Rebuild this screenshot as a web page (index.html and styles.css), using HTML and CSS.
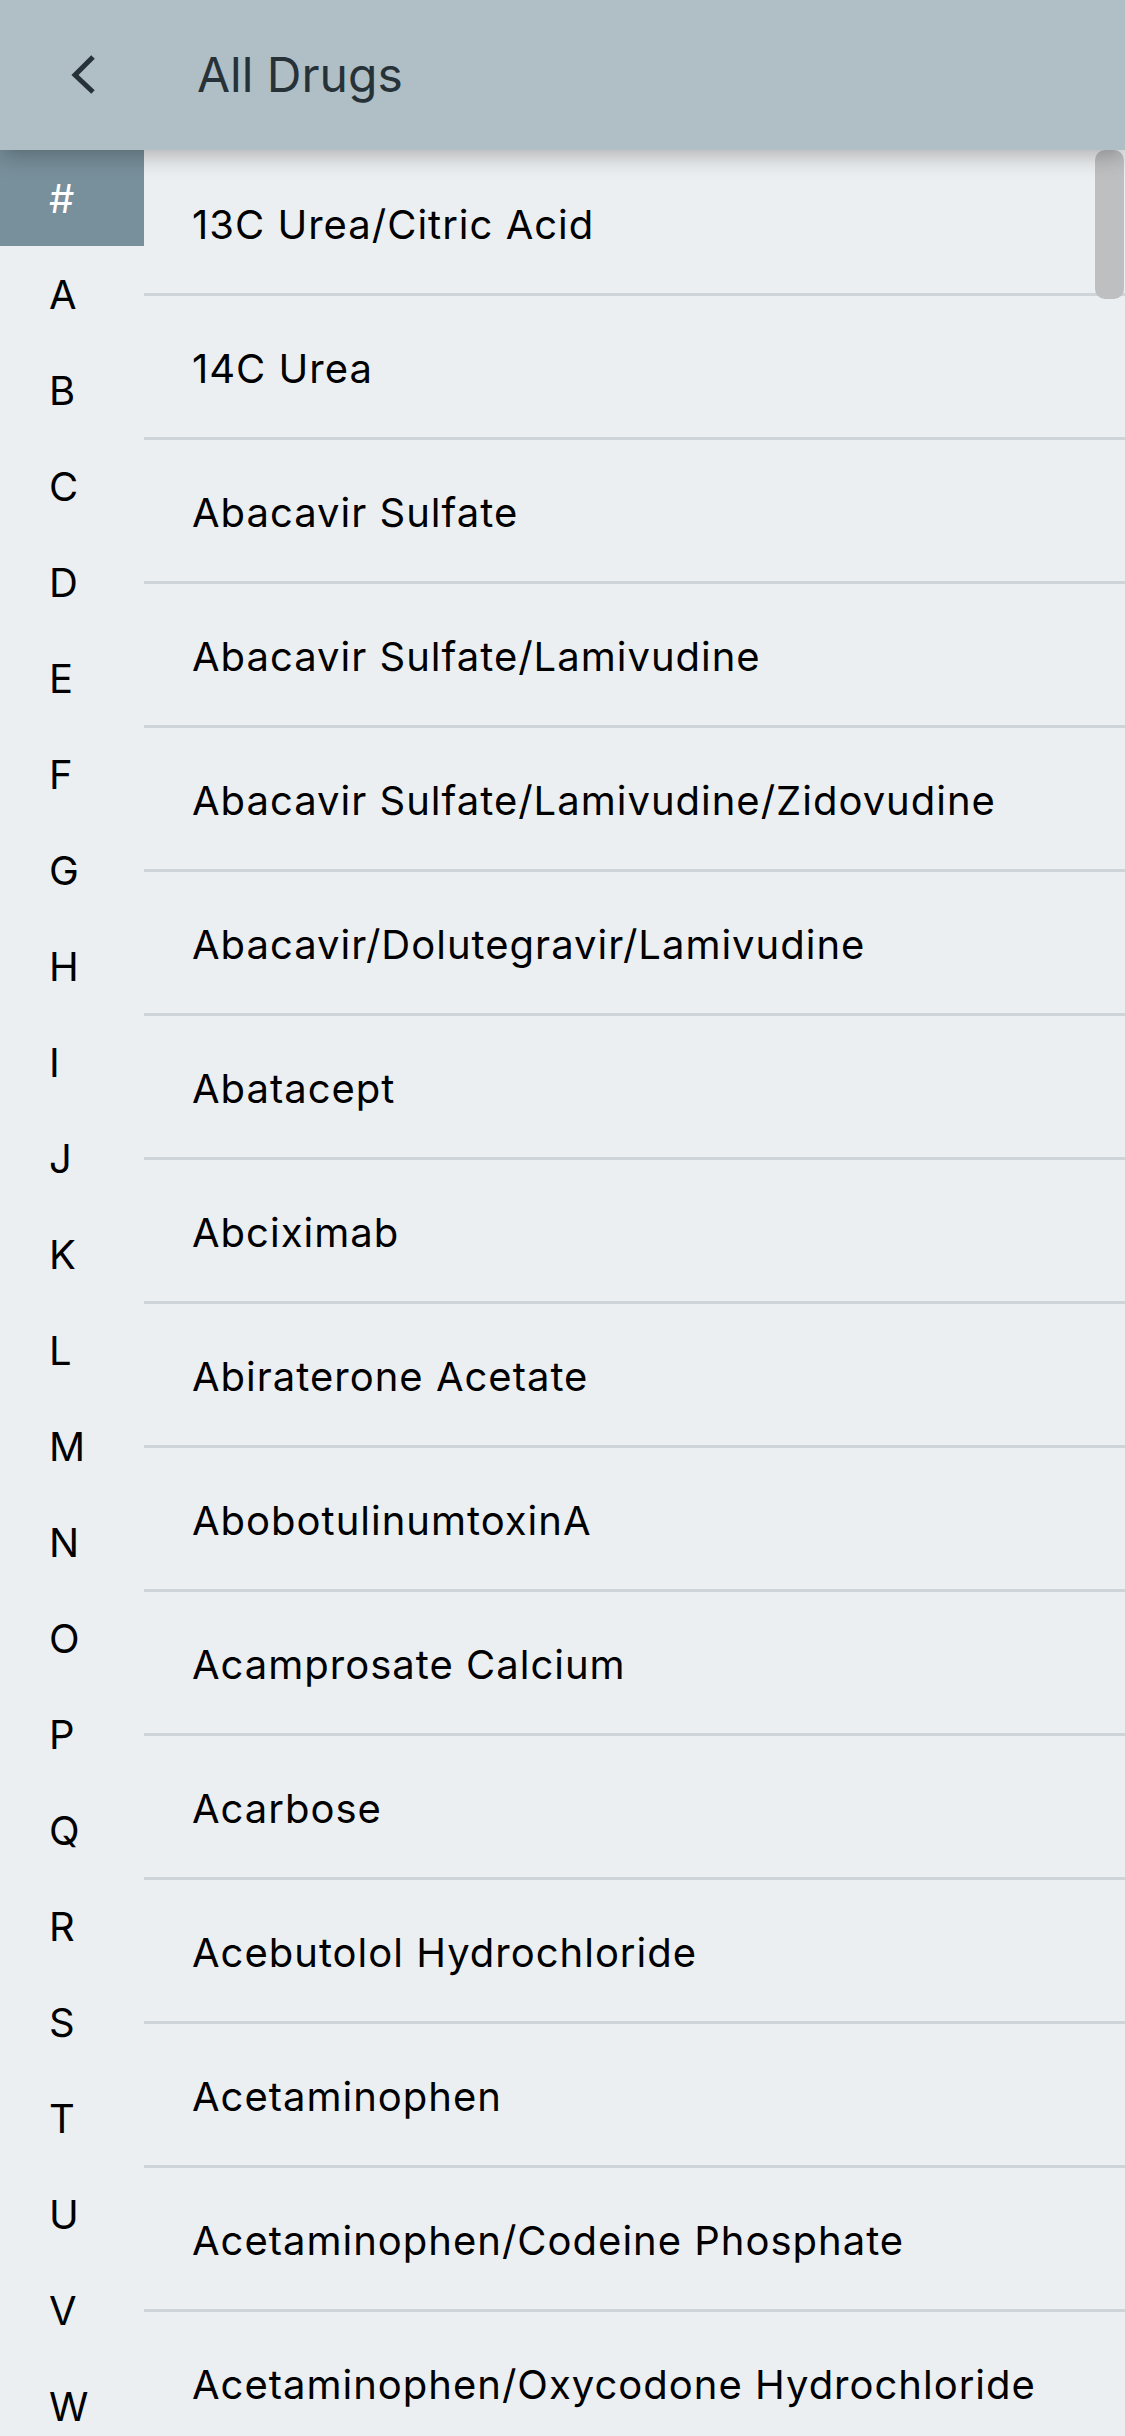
FILE: index.html
```html
<!DOCTYPE html>
<html>
<head>
<meta charset="utf-8">
<link rel="stylesheet" href="styles.css">
</head>
<body>
<div class="app">
  <header class="topbar">
    <div class="back">
      <svg width="40" height="48" viewBox="0 0 40 48"><polyline points="29,7 11,25 29,42" fill="none" stroke="#263238" stroke-width="5" stroke-linecap="butt" stroke-linejoin="miter"/></svg>
    </div>
    <div class="title">All Drugs</div>
  </header>
  <div class="content">
    <nav class="index">
      <div class="letter active">#</div>
      <div class="letter">A</div>
      <div class="letter">B</div>
      <div class="letter">C</div>
      <div class="letter">D</div>
      <div class="letter">E</div>
      <div class="letter">F</div>
      <div class="letter">G</div>
      <div class="letter">H</div>
      <div class="letter">I</div>
      <div class="letter">J</div>
      <div class="letter">K</div>
      <div class="letter">L</div>
      <div class="letter">M</div>
      <div class="letter">N</div>
      <div class="letter">O</div>
      <div class="letter">P</div>
      <div class="letter">Q</div>
      <div class="letter">R</div>
      <div class="letter">S</div>
      <div class="letter">T</div>
      <div class="letter">U</div>
      <div class="letter">V</div>
      <div class="letter">W</div>
    </nav>
    <div class="list">
      <div class="thumb"></div>
      <div class="row">13C Urea/Citric Acid</div>
      <div class="row">14C Urea</div>
      <div class="row">Abacavir Sulfate</div>
      <div class="row">Abacavir Sulfate/Lamivudine</div>
      <div class="row">Abacavir Sulfate/Lamivudine/Zidovudine</div>
      <div class="row">Abacavir/Dolutegravir/Lamivudine</div>
      <div class="row">Abatacept</div>
      <div class="row">Abciximab</div>
      <div class="row">Abiraterone Acetate</div>
      <div class="row">AbobotulinumtoxinA</div>
      <div class="row">Acamprosate Calcium</div>
      <div class="row">Acarbose</div>
      <div class="row">Acebutolol Hydrochloride</div>
      <div class="row">Acetaminophen</div>
      <div class="row">Acetaminophen/Codeine Phosphate</div>
      <div class="row">Acetaminophen/Oxycodone Hydrochloride</div>
    </div>
  </div>
</div>
</body>
</html>
```

FILE: styles.css
```css
* { box-sizing: border-box; }
html, body {
  margin: 0;
  padding: 0;
  background: #eceff1;
}
body {
  font-family: "Inter", "Roboto", "Liberation Sans", sans-serif;
  color: #000;
  width: 1125px;
  height: 2436px;
  overflow: hidden;
}
.app {
  display: flex;
  flex-direction: column;
  height: 2436px;
}
.topbar {
  height: 150px;
  flex: none;
  background: #b0bec5;
  display: flex;
  align-items: center;
  position: relative;
  z-index: 2;
  box-shadow: 0 5px 22px rgba(0, 0, 0, 0.28);
}
.back {
  width: 144px;
  display: flex;
  align-items: center;
  padding-left: 64px;
  padding-bottom: 2px;
}
.back svg { display: block; }
.title {
  font-size: 48px;
  color: #263238;
  font-weight: 400;
  margin-left: 53px;
  letter-spacing: 0;
  padding-bottom: 2px;
}
.content {
  flex: 1;
  display: flex;
  min-height: 0;
  overflow: hidden;
}
.index {
  width: 144px;
  flex: none;
  display: flex;
  flex-direction: column;
}
.letter {
  height: 96px;
  flex: none;
  display: flex;
  align-items: center;
  padding-left: 49px;
  font-size: 40px;
  color: #000;
}
.letter.active {
  background: #78909c;
  color: #fff;
}
.list {
  flex: 1;
  position: relative;
  padding-top: 2px;
}
.row {
  height: 144px;
  border-bottom: 3px solid #cfd4d8;
  display: flex;
  align-items: center;
  padding-left: 48px;
  padding-top: 3px;
  font-size: 40px;
  letter-spacing: 1px;
  color: #000;
  white-space: nowrap;
}
.thumb {
  position: absolute;
  top: 0;
  right: 1px;
  width: 29px;
  height: 149px;
  border-radius: 10px;
  background: #bebfc1;
}
```
